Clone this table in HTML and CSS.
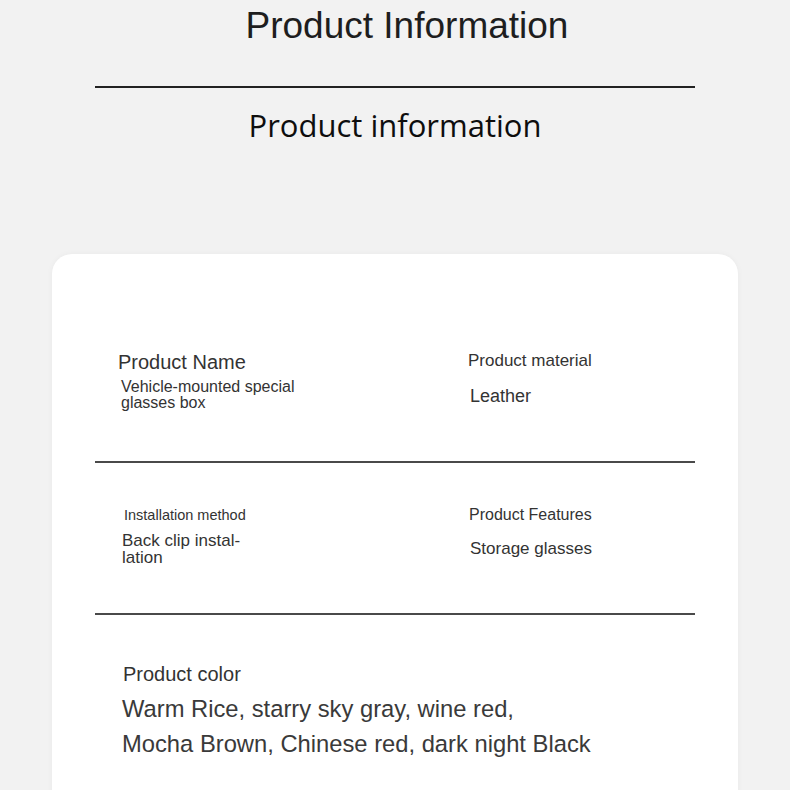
FILE: index.html
```html
<!DOCTYPE html>
<html lang="en">
<head>
  <meta charset="UTF-8" />
  <meta name="viewport" content="width=device-width, initial-scale=1.0"/>
  <title>Product Information</title>

  <link rel="stylesheet" href="styles.css">
</head>
<body>

<main class="page">
  <h1 class="title">Product Information</h1>
  <div class="title-rule"></div>
  <h2 class="subtitle">Product information</h2>

  <section class="info-card">
    <div class="info-row row-name">
      <div class="info-item">
        <div class="label label-lg">Product Name</div>
        <div class="value value-sm">Vehicle-mounted special glasses box</div>
      </div>
      <div class="info-item">
        <div class="label label-md">Product material</div>
        <div class="value value-leather">Leather</div>
      </div>
    </div>

    <div class="divider"></div>

    <div class="info-row row-install">
      <div class="info-item">
        <div class="label label-sm">Installation method</div>
        <div class="value value-install">Back clip instal&shy;lation</div>
      </div>
      <div class="info-item">
        <div class="label label-features">Product Features</div>
        <div class="value value-storage">Storage glasses</div>
      </div>
    </div>

    <div class="divider divider-second"></div>

    <div class="info-row row-color">
      <div class="info-item">
        <div class="label label-lg label-color">Product color</div>
        <div class="value value-lg">Warm Rice, starry sky gray, wine red,<br>Mocha Brown, Chinese red, dark night Black</div>
      </div>
    </div>
  </section>
</main>

</body>
</html>
```

FILE: styles.css
```css
body {
  margin: 0;
  background: #f2f2f2;
  font-family: "Liberation Sans", Arial, sans-serif;
  color: #333;
}

.page {
  padding-top: 7px;
}

.title {
  margin: 0;
  padding-left: 24px;
  text-align: center;
  font-size: 37px;
  line-height: 37px;
  font-weight: normal;
  color: #1e1e1e;
}

.title-rule {
  width: 600px;
  height: 2px;
  margin: 42px auto 0;
  background: #222;
}

.subtitle {
  margin: 22px 0 0;
  text-align: center;
  font-family: "Open Sans", "Noto Sans", sans-serif;
  font-size: 31px;
  line-height: 31px;
  font-weight: normal;
  color: #0e0e0e;
}

/* Card */
.info-card {
  margin: 113px 52px 0;
  padding: 98px 43px 80px;
  background: #fff;
  border-radius: 20px;
  box-shadow: 0 0 6px rgba(0, 0, 0, 0.04);
}

.info-row {
  display: grid;
  grid-template-columns: 350px 1fr;
  padding-left: 23px;
}

.label, .value {
  font-weight: normal;
}

.label-lg { font-size: 20px; line-height: 20px; }
.label-md { font-size: 17px; line-height: 17px; }
.label-sm { font-size: 14.5px; line-height: 14.5px; margin: 1px 0 0 6px; }
.label-features { font-size: 16px; line-height: 16px; margin-left: 1px; }
.label-color { margin-left: 5px; }

.value-sm {
  max-width: 185px;
  margin: 7px 0 0 3px;
  font-size: 16px;
  line-height: 16px;
}

.value-leather {
  margin: 18px 0 0 2px;
  font-size: 18px;
  line-height: 18px;
}

.value-install {
  max-width: 125px;
  margin: 9px 0 0 4px;
  font-size: 17px;
  line-height: 17.5px;
}

.value-storage {
  margin: 17px 0 0 2px;
  font-size: 17px;
  line-height: 17px;
}

.value-lg {
  margin: 7px 0 0 4px;
  font-size: 23.75px;
  line-height: 35px;
  color: #3a3a3a;
}

.divider {
  height: 2px;
  margin-top: 50px;
  background: #4a4a4a;
}

.divider-second {
  margin-top: 46px;
}

.row-install {
  padding-top: 44px;
}

.row-color {
  grid-template-columns: 1fr;
  padding-top: 49px;
}
```
